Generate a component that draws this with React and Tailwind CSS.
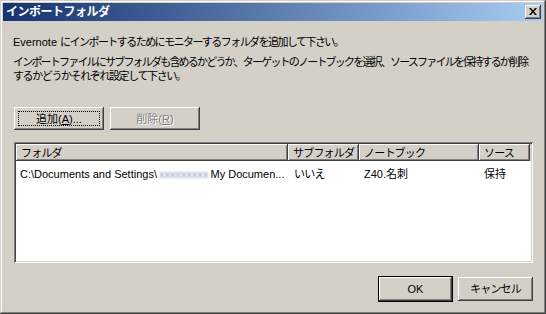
import React from 'react';

const font = "font-['Liberation_Sans','Noto_Sans_CJK_JP',sans-serif]";

const raised =
  'shadow-[inset_-1px_-1px_#404040,inset_1px_1px_#ffffff,inset_-2px_-2px_#808080]';

const Button = ({ children, disabled, focused, isDefault, className = '' }) => (
  <div
    className={`relative flex items-center justify-center bg-[#d4d0c8] ${raised} ${
      isDefault ? 'outline outline-1 outline-black' : ''
    } ${className}`}
  >
    {focused && (
      <div className="absolute inset-[4px] border border-dotted border-black" />
    )}
    <span
      className={
        disabled
          ? 'text-[#808080] [text-shadow:1px_1px_0_#ffffff]'
          : 'text-black'
      }
    >
      {children}
    </span>
  </div>
);

const HeaderCell = ({ children, className = '' }) => (
  <div
    className={`flex h-[17px] shrink-0 items-center overflow-hidden whitespace-nowrap bg-[#d4d0c8] pl-[5px] tracking-[-0.8px] shadow-[inset_-1px_-1px_#404040,inset_1px_1px_#ffffff,inset_-2px_-2px_#808080] ${className}`}
  >
    {children}
  </div>
);

const App = () => {
  return (
    <div
      className={`${font} h-[314px] w-[546px] bg-[#d4d0c8] p-[3px] text-[11px] leading-[14px] text-black shadow-[inset_-1px_-1px_#404040,inset_1px_1px_#d4d0c8,inset_-2px_-2px_#808080,inset_2px_2px_#ffffff]`}
    >
      {/* title bar */}
      <div className="flex h-[18px] items-center justify-between bg-linear-to-r from-[#17336f] to-[#a8cdf2] pl-[3px] pr-[2px]">
        <span className="text-[12px] font-bold tracking-[-0.5px] text-white">インポートフォルダ</span>
        <div className={`flex h-[14px] w-[16px] items-center justify-center bg-[#d4d0c8] ${raised}`}>
          <svg width="8" height="7" viewBox="0 0 8 7" className="mb-[1px]">
            <path d="M0 0h2l2 2.5L6 0h2L5 3.5 8 7H6L4 4.5 2 7H0l3-3.5z" fill="#000" />
          </svg>
        </div>
      </div>

      <div className="px-[10px] pt-[14px]">
        <p className="whitespace-nowrap">
          Evernote <span className="tracking-[-1.55px]">にインポートするためにモニターするフォルダを追加して下さい。</span>
        </p>
        <p className="mt-[6px] whitespace-nowrap tracking-[-1.8px]">
          インポートファイルにサブフォルダも含めるかどうか、ターゲットのノートブックを選択、ソースファイルを保持するか削除
          <br />
          <span className="tracking-[-1.4px]">するかどうかそれぞれ設定して下さい。</span>
        </p>

        <div className="ml-[1px] mt-[24px] flex gap-[6px]">
          <Button focused className="h-[23px] w-[90px]">追加(<u>A</u>)...</Button>
          <Button disabled className="h-[23px] w-[90px]">削除(<u>R</u>)</Button>
        </div>

        {/* list view */}
        <div className="ml-[1px] mt-[12px] h-[121px] w-[519px] bg-white p-[2px] shadow-[inset_1px_1px_#808080,inset_-1px_-1px_#ffffff,inset_2px_2px_#404040,inset_-2px_-2px_#d4d0c8]">
          <div className="flex">
            <HeaderCell className="w-[272px]">フォルダ</HeaderCell>
            <HeaderCell className="w-[71px]">サブフォルダ</HeaderCell>
            <HeaderCell className="w-[120px]">ノートブック</HeaderCell>
            <HeaderCell className="w-[51px]">ソース</HeaderCell>
            <div className="h-[17px] flex-1 bg-[#d4d0c8]" />
          </div>
          <div className="mt-[6px] flex h-[14px] items-center">
            <div className="flex w-[272px] shrink-0 items-center whitespace-nowrap pl-[4px]">
              <span>C:\Documents and Settings\</span>
              <span className="mx-[2px] text-[#7f93b8] blur-[1px]">xxxxxxxxx</span>
              <span>My Documen...</span>
            </div>
            <div className="w-[71px] shrink-0 pl-[6px] tracking-[-0.8px]">いいえ</div>
            <div className="w-[120px] shrink-0 pl-[5px]">Z40.名刺</div>
            <div className="w-[51px] shrink-0 pl-[5px]">保持</div>
          </div>
        </div>

        <div className="mt-[14px] flex justify-end gap-[6px]">
          <Button isDefault className="h-[24px] w-[73px]">OK</Button>
          <Button className="h-[24px] w-[75px] tracking-[-0.8px]">キャンセル</Button>
        </div>
      </div>
    </div>
  );
};

export default App;
